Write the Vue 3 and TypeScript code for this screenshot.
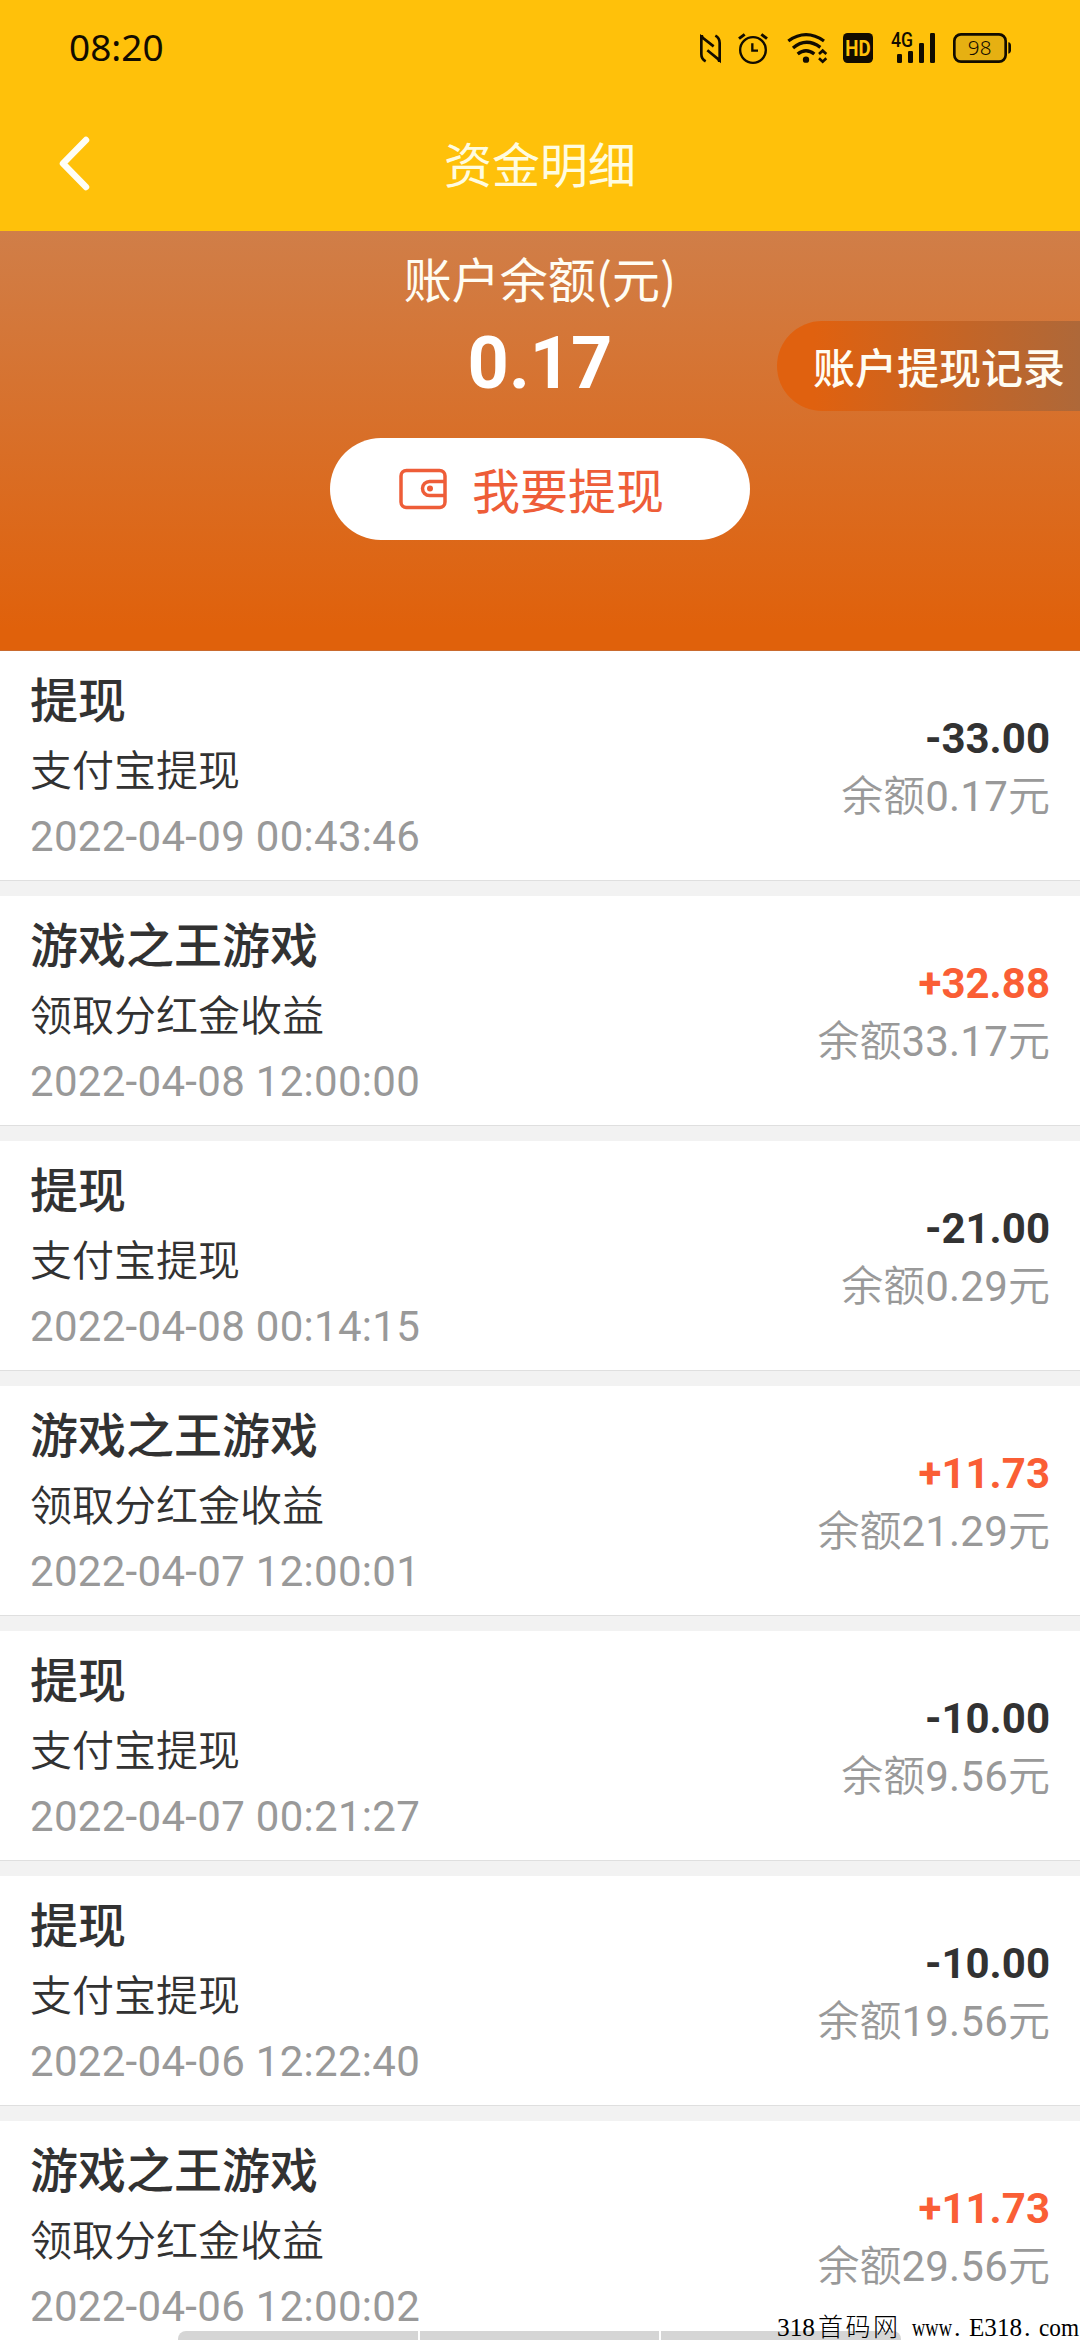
<script setup lang="ts">
interface FundRecord {
  title: string
  note: string
  time: string
  amount: string
  balance: string
}

const records: FundRecord[] = [
  { title: '提现', note: '支付宝提现', time: '2022-04-09 00:43:46', amount: '-33.00', balance: '0.17' },
  { title: '游戏之王游戏', note: '领取分红金收益', time: '2022-04-08 12:00:00', amount: '+32.88', balance: '33.17' },
  { title: '提现', note: '支付宝提现', time: '2022-04-08 00:14:15', amount: '-21.00', balance: '0.29' },
  { title: '游戏之王游戏', note: '领取分红金收益', time: '2022-04-07 12:00:01', amount: '+11.73', balance: '21.29' },
  { title: '提现', note: '支付宝提现', time: '2022-04-07 00:21:27', amount: '-10.00', balance: '9.56' },
  { title: '提现', note: '支付宝提现', time: '2022-04-06 12:22:40', amount: '-10.00', balance: '19.56' },
  { title: '游戏之王游戏', note: '领取分红金收益', time: '2022-04-06 12:00:02', amount: '+11.73', balance: '29.56' },
]
</script>

<template>
  <div class="screen">
    <div class="status">
      <span class="clock">08:20</span>
      <div class="status-icons">
        <svg class="nfc" width="24" height="34" viewBox="57 60 72 102" fill="none" stroke="#120c00" stroke-width="8">
          <path d="M77 154Q64 147 64 132V80L101 109" />
          <path d="M106 77Q119 84 119 99V151L82 121" />
          <path d="M60 75H69L72 86H60ZM123 156H114L111 145H123Z" fill="#120c00" stroke="none" />
        </svg>
        <svg class="alarm" width="32" height="34" viewBox="171 60 96 102" fill="none" stroke="#120c00" stroke-width="7">
          <circle cx="219" cy="120" r="38.500" />
          <path d="M217 100V122H234" />
          <path d="M177 86L194 73M261 86L244 73" stroke-width="9" />
        </svg>
        <svg class="wifi" width="43" height="34" viewBox="318 60 129 102" fill="none" stroke="#120c00" stroke-width="10">
          <path d="M325 93Q378 55 432 93" />
          <path d="M339 114Q378 81 421 112" />
          <path d="M353 132Q378 112 403 132" />
          <circle cx="378" cy="149" r="9.500" fill="#120c00" stroke="none" />
          <path d="M417 132L428 122L439 132M417 145L428 155L439 145" stroke-width="8" />
        </svg>
        <svg class="hd" width="32" height="34" viewBox="486 60 96 102">
          <rect x="489" y="69" width="90" height="90" rx="14" fill="#120c00" />
          <text x="534" y="138" text-anchor="middle" textLength="76" lengthAdjust="spacingAndGlyphs" font-size="68" font-weight="700" fill="#ffc10a">HD</text>
        </svg>
        <svg class="signal" width="46" height="34" viewBox="630 60 138 102" fill="#120c00">
          <text x="633" y="111" textLength="66" lengthAdjust="spacingAndGlyphs" font-size="59" font-weight="500">4G</text>
          <rect x="651" y="132" width="15" height="27" rx="4" />
          <rect x="684" y="123" width="15" height="36" rx="4" />
          <rect x="717" y="99" width="15" height="60" rx="4" />
          <rect x="750" y="69" width="15" height="90" rx="4" />
        </svg>
        <svg class="battery" width="60" height="34" viewBox="816 60 180 102">
          <rect x="823" y="73" width="154" height="82" rx="20" fill="#e6b012" stroke="#120c00" stroke-width="8" />
          <path d="M985 97Q993 98 993 107V121Q993 130 985 131Z" fill="#120c00" />
          <text class="level" x="899" y="136" text-anchor="middle" font-size="62" fill="#120c00">98</text>
        </svg>
      </div>
    </div>

    <header class="navbar">
      <svg class="back" width="36" height="60" viewBox="0 0 36 60" fill="none" stroke="#fffef6" stroke-width="6.500" stroke-linecap="round" stroke-linejoin="round">
        <path d="M29 7L6 30.500L29 54" />
      </svg>
      <h1>资金明细</h1>
    </header>

    <section class="summary">
      <div class="label">账户余额(元)</div>
      <div class="total">0.17</div>
      <button class="withdraw" type="button">
        <svg width="48" height="42" viewBox="0 0 48 42" fill="none" stroke="#ee5d38" stroke-width="3.500">
          <rect x="2" y="2.500" width="44" height="37" rx="5.500" />
          <path d="M46 13.500H30.500A7 7 0 0 0 30.500 27.500H46" />
          <circle cx="31" cy="20.500" r="3" fill="#ee5d38" stroke="none" />
        </svg>
        <span>我要提现</span>
      </button>
      <div class="history">账户提现记录</div>
    </section>

    <main class="list">
      <article v-for="record in records" :key="record.time" class="record">
        <div class="info">
          <div class="title">{{ record.title }}</div>
          <div class="note">{{ record.note }}</div>
          <div class="time">{{ record.time }}</div>
        </div>
        <div class="money">
          <div class="amount" :class="{ income: record.amount.startsWith('+') }">{{ record.amount }}</div>
          <div class="balance">余额<span>{{ record.balance }}</span>元</div>
        </div>
      </article>
    </main>

    <div class="gesture"><i></i><i></i><i></i></div>
    <svg class="site-mark" width="304" height="28" viewBox="0 0 304 28">
      <text x="1" y="23.500" textLength="38" lengthAdjust="spacingAndGlyphs">318</text>
      <text class="name" x="42" y="24" textLength="80">首码网</text>
      <text x="136" y="23.500" textLength="40" lengthAdjust="spacingAndGlyphs">www</text>
      <text x="178" y="23.500">.</text>
      <text x="193" y="23.500" textLength="53" lengthAdjust="spacingAndGlyphs">E318</text>
      <text x="248" y="23.500">.</text>
      <text x="263" y="23.500" textLength="40" lengthAdjust="spacingAndGlyphs">com</text>
    </svg>
  </div>
</template>

<style>
body {
  margin: 0;
  overflow: hidden;
}
</style>

<style scoped>
.screen {
  position: relative;
  width: 1080px;
  height: 2340px;
  overflow: hidden;
  background: #fff;
  color: #323232;
  font-family: "Noto Sans CJK SC", sans-serif;
}

.status {
  display: flex;
  align-items: center;
  justify-content: space-between;
  box-sizing: border-box;
  height: 94px;
  padding: 0 68px 0 69px;
  background: #ffc10a;
}

.clock {
  font: 400 37px/94px "Noto Sans", sans-serif;
  color: #120c00;
}

.status-icons {
  display: flex;
  align-items: center;
  font-family: Roboto, sans-serif;
}

.alarm { margin-left: 14px; }
.wifi { margin-left: 17px; }
.hd { margin-left: 13px; }
.signal { margin-left: 16px; }
.battery { margin-left: 16px; }
.level { font-family: "Noto Sans", sans-serif; font-weight: 300; }

.navbar {
  display: grid;
  grid-template-columns: 57px 36px 1fr 93px;
  align-items: center;
  height: 137px;
  background: #ffc10a;
}

.back {
  grid-column: 2;
}

h1 {
  margin: 0;
  padding-bottom: 1px;
  text-align: center;
  font-size: 48px;
  line-height: 60px;
  font-weight: 400;
  color: #fffce0;
}

.summary {
  position: relative;
  display: flex;
  flex-direction: column;
  align-items: center;
  box-sizing: border-box;
  height: 420px;
  padding-top: 11px;
  border-bottom: 1px solid #c96a2e;
  background: linear-gradient(#d07e48, #e0610b 95%);
  color: #fffdf3;
}

.label {
  font-size: 48px;
  line-height: 70px;
}

.total {
  height: 84px;
  margin: 10px 0 32px;
  font: 700 72px/84px Roboto, sans-serif;
  color: #fff;
}

.withdraw {
  display: flex;
  align-items: center;
  gap: 25px;
  box-sizing: border-box;
  width: 420px;
  height: 102px;
  padding: 0 0 0 69px;
  border: 0;
  border-radius: 51px;
  background: #fff;
  color: #ee5d38;
  font-family: inherit;
  font-size: 48px;
  line-height: 96px;
}

.withdraw span {
  padding-bottom: 3px;
}

.history {
  position: absolute;
  right: 0;
  top: 90px;
  box-sizing: border-box;
  width: 303px;
  height: 90px;
  padding-left: 36px;
  border-radius: 45px 0 0 45px;
  background: linear-gradient(90deg, #e0610f 12%, #ae6839);
  font-size: 42px;
  font-weight: 500;
  line-height: 89px;
  white-space: nowrap;
}

.record {
  display: flex;
  justify-content: space-between;
  box-sizing: border-box;
  height: 245px;
  padding: 0 30px;
  background: linear-gradient(#fff 229px, #dfdfdf 229px, #dfdfdf 230px, #f2f2f2 230px);
}

.info {
  padding-top: 11px;
}

.title {
  font-size: 48px;
  font-weight: 500;
  line-height: 70px;
}

.note {
  padding-top: 1px;
  font-size: 42px;
  font-weight: 350;
  line-height: 70px;
}

.time {
  padding-top: 2px;
  font: 400 42px/64px Roboto, sans-serif;
  letter-spacing: 0.3px;
  color: #999;
}

.money {
  padding-top: 58px;
  text-align: right;
}

.amount {
  font: 700 42px/60px Roboto, sans-serif;
}

.income {
  color: #fa5e35;
}

.balance {
  height: 56px;
  font-size: 42px;
  line-height: 47px;
  font-weight: 350;
  color: #999;
}

.balance span {
  font-family: Roboto, sans-serif;
  font-weight: 400;
  letter-spacing: 0.2px;
}

.gesture {
  position: absolute;
  left: 178px;
  bottom: 0;
  display: flex;
  gap: 2px;
  width: 723px;
  height: 9px;
  border-radius: 8px 8px 0 0;
  overflow: hidden;
}

.gesture i {
  flex: 1;
  background: #d5d5d5;
}

.site-mark {
  position: absolute;
  left: 776px;
  bottom: 0;
  fill: #000;
  font-family: "Liberation Serif", serif;
  font-size: 26px;
}

.name {
  font-family: "Noto Sans CJK SC", sans-serif;
  font-size: 25px;
  font-weight: 300;
}
</style>
